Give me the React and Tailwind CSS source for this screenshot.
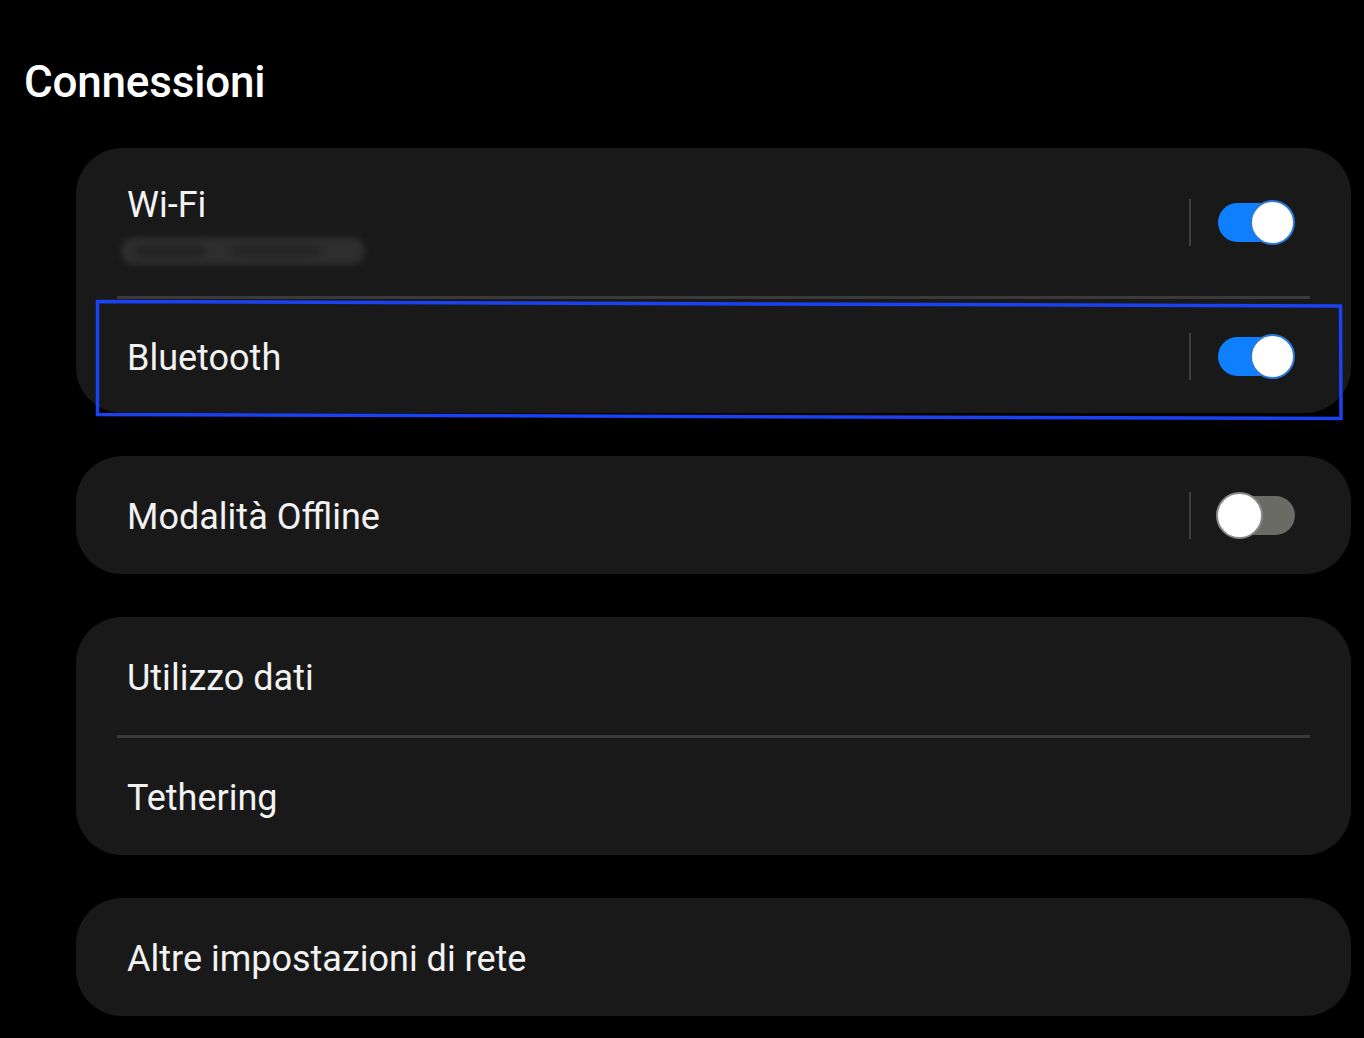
import React from "react";

function Toggle({ on }) {
  if (on) {
    return (
      <div className="relative w-[78px] h-[46px] flex items-center">
        <div className="ml-[1px] w-[76px] h-[39px] rounded-full bg-[#0e80ff]" />
        <div className="absolute right-0 top-[1px] w-[45px] h-[45px] rounded-full bg-white border-[2px] border-[#2a78d8]" />
      </div>
    );
  }
  return (
    <div className="relative w-[78px] h-[48px] flex items-center">
      <div className="ml-[18px] w-[60px] h-[39px] rounded-full bg-[#6a6b65]" />
      <div className="absolute -left-[1px] top-[1px] w-[47px] h-[47px] rounded-full bg-white border-[2px] border-[#8a8a8a]" />
    </div>
  );
}

function Divider() {
  return <div className="w-[2px] h-[47px] bg-[#3e3e3e] mr-[26px]" />;
}

function Sep() {
  return <div className="mx-[41px] h-[3px] bg-[#3a3a3a]" />;
}

const text = "pt-[3px] text-[36px] leading-[40px] text-[#f2f2f2]";

export default function App() {
  return (
    <div
      className="relative w-[1364px] h-[1038px] bg-black overflow-hidden"
      style={{ fontFamily: "Roboto, 'Noto Sans', sans-serif" }}
    >
      <div className="pt-[57px] pl-[24px] text-[44px] leading-[50px] font-medium text-white tracking-[-0.2px]">
        Connessioni
      </div>

      <div className="mt-[41px] ml-[76px] mr-[13px] flex flex-col gap-[43px]">
        <div className="rounded-[46px] bg-[#191919] overflow-hidden">
          <div className="h-[148px] flex items-center pl-[51px] pr-[56px]">
            <div className="flex-1 flex flex-col pt-[2px]">
              <div className={text}>Wi-Fi</div>
              <div className="relative mt-[12px] -ml-[6px] w-[244px] h-[28px]">
                <div className="absolute inset-0 rounded-full bg-[#2e2e2e] blur-[3px]" />
                <div className="absolute left-[14px] top-[8px] w-[70px] h-[12px] rounded-full bg-[#242424] blur-[3px]" />
                <div className="absolute left-[110px] top-[7px] w-[90px] h-[13px] rounded-full bg-[#262626] blur-[3px]" />
              </div>
            </div>
            <Divider />
            <Toggle on />
          </div>
          <Sep />
          <div className="h-[114px] flex items-center pl-[51px] pr-[56px]">
            <div className={"flex-1 " + text}>Bluetooth</div>
            <Divider />
            <Toggle on />
          </div>
        </div>

        <div className="rounded-[46px] bg-[#191919]">
          <div className="h-[118px] flex items-center pl-[51px] pr-[56px]">
            <div className={"flex-1 " + text}>Modalità Offline</div>
            <Divider />
            <Toggle on={false} />
          </div>
        </div>

        <div className="rounded-[46px] bg-[#191919]">
          <div className="h-[118px] flex items-center pl-[51px]">
            <div className={text}>Utilizzo dati</div>
          </div>
          <Sep />
          <div className="h-[117px] flex items-center pl-[51px]">
            <div className={text}>Tethering</div>
          </div>
        </div>

        <div className="rounded-[46px] bg-[#191919]">
          <div className="h-[118px] flex items-center pl-[51px]">
            <div className={text}>Altre impostazioni di rete</div>
          </div>
        </div>
      </div>

      <svg
        className="absolute left-0 top-0 pointer-events-none"
        width="1364"
        height="1038"
      >
        <polygon
          points="97.5,301.5 1340.5,306 1341,418.5 97.5,414.5"
          fill="none"
          stroke="#1b42f2"
          strokeWidth="3.5"
        />
      </svg>
    </div>
  );
}
